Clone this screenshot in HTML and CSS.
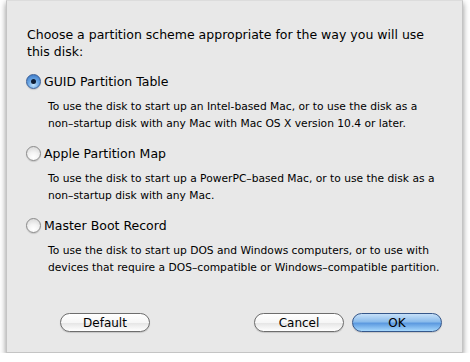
FILE: index.html
```html
<!DOCTYPE html>
<html lang="en">
  <head>
    <meta charset="UTF-8" />
    <title>Partition Options</title>
    <link rel="stylesheet" href="styles.css">
  </head>
  <body>
    <div class="sheet">
      <p class="prompt">Choose a partition scheme appropriate for the way you will use this disk:</p>

      <div class="option">
        <label class="choice">
          <span class="radio checked"></span>
          <span class="name">GUID Partition Table</span>
        </label>
        <p class="desc">To use the disk to start up an Intel-based Mac, or to use the disk as a non–startup disk with any Mac with Mac OS X version 10.4 or later.</p>
      </div>

      <div class="option">
        <label class="choice">
          <span class="radio"></span>
          <span class="name">Apple Partition Map</span>
        </label>
        <p class="desc">To use the disk to start up a PowerPC–based Mac, or to use the disk as a non–startup disk with any Mac.</p>
      </div>

      <div class="option">
        <label class="choice">
          <span class="radio"></span>
          <span class="name">Master Boot Record</span>
        </label>
        <p class="desc">To use the disk to start up DOS and Windows computers, or to use with devices that require a DOS–compatible or Windows–compatible partition.</p>
      </div>

      <div class="buttons">
        <button class="btn">Default</button>
        <span class="spacer"></span>
        <button class="btn">Cancel</button>
        <button class="btn primary">OK</button>
      </div>
    </div>
  </body>
</html>
```

FILE: styles.css
```css
/* Page */
body {
  margin: 0;
  background: #ffffff;
  font-family: "DejaVu Sans", "Liberation Sans", sans-serif;
  color: #000;
}

/* --- Dialog sheet --- */
.sheet {
  margin-left: 6px;
  width: 457px;
  height: 353px;
  box-sizing: border-box;
  background: #e8e8e8;
  border: 1px solid #c4c4c4;
  border-top-color: #dcdcdc;
  box-shadow: 0 3px 6px rgba(0, 0, 0, 0.45);
  padding: 25px 20px 0 20px;
  display: flex;
  flex-direction: column;
}

.prompt {
  margin: 0;
  font-size: 12.5px;
  line-height: 17px;
  width: 400px;
}

/* --- Radio options --- */
.option {
  margin-top: 12px;
}

.option + .option {
  margin-top: 12px;
}

.choice {
  display: flex;
  align-items: center;
  gap: 3px;
  height: 18px;
  margin-left: -1px;
}

.name {
  font-size: 12.5px;
}

.radio {
  width: 15px;
  height: 15px;
  border-radius: 50%;
  box-sizing: border-box;
  border: 1px solid #8a8a8a;
  background: radial-gradient(circle at 50% 80%, #ffffff 0%, #f4f4f4 40%, #d2d2d2 100%);
  box-shadow: 0 1px 1px rgba(0, 0, 0, 0.15);
  position: relative;
}

.radio.checked {
  border-color: #3a5f97;
  background: radial-gradient(circle at 50% 75%, #c4e3fb 0%, #6aa6e4 45%, #2e6cbf 100%);
}

.radio.checked:after {
  content: "";
  position: absolute;
  width: 5px;
  height: 5px;
  border-radius: 50%;
  background: #0d1c33;
  top: 4px;
  left: 4px;
}

.desc {
  margin: 8px 0 0 21px;
  font-size: 10.7px;
  line-height: 17px;
  width: 395px;
}

/* --- Buttons --- */
.buttons {
  margin-top: auto;
  margin-bottom: 20px;
  display: flex;
  align-items: center;
  padding-left: 33px;
  gap: 8px;
}

.spacer {
  flex: 1;
}

.btn {
  width: 90px;
  height: 19px;
  border-radius: 10px;
  border: 1px solid #6d6d6d;
  background: linear-gradient(#ffffff 0%, #f6f6f6 50%, #e6e6e6 55%, #ffffff 100%);
  font-family: "DejaVu Sans", "Liberation Sans", sans-serif;
  font-size: 12px;
  color: #000;
  padding: 0;
  box-shadow: 0 1px 1px rgba(0, 0, 0, 0.15);
}

.btn.primary {
  border-color: #35578a;
  background: linear-gradient(#c6e0f8 0%, #8bbcec 45%, #5c9ae0 55%, #a6d8fd 100%);
}
```
